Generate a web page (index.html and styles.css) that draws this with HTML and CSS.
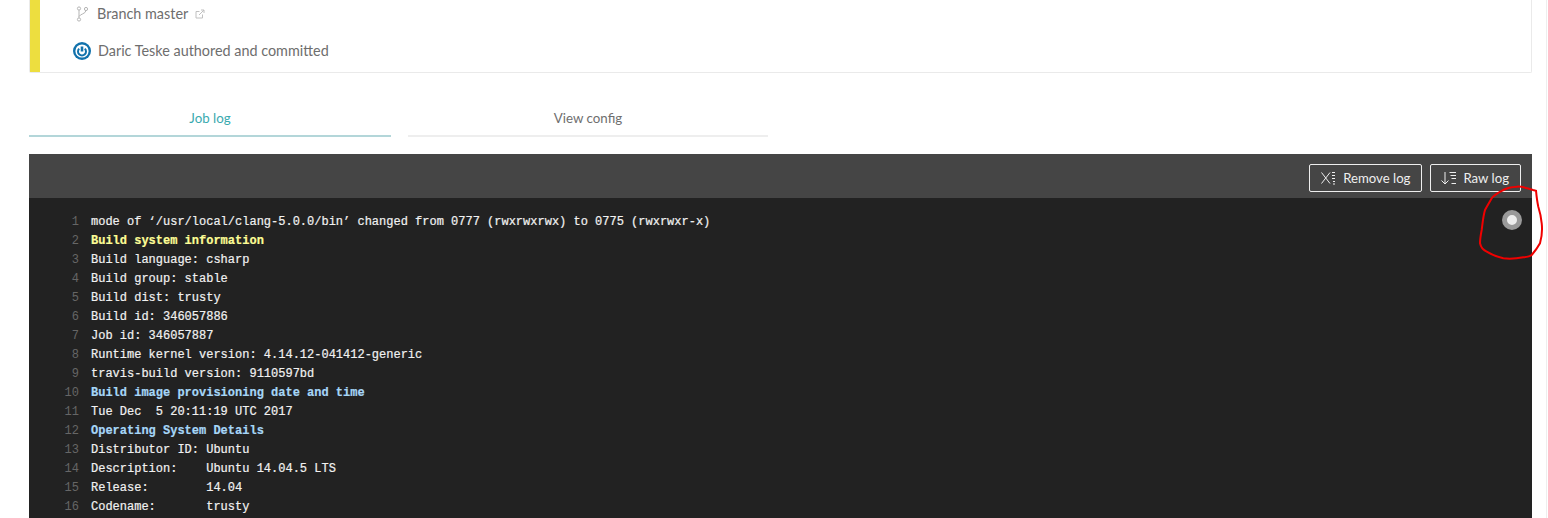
FILE: index.html
```html
<!DOCTYPE html>
<html lang="en">
<head>
<meta charset="utf-8">
<title>Job log</title>
<link rel="stylesheet" href="styles.css">
</head>
<body>
<main class="page">
  <section class="card">
    <div class="stripe"></div>
    <div class="meta">
      <div class="row branch">
        <svg class="i-branch" viewBox="0 0 12 16" width="12" height="16" fill="none" stroke="#b5b5b5" stroke-width="1">
          <circle cx="3" cy="2.5" r="1.6"/><circle cx="3" cy="13.5" r="1.6"/><circle cx="10" cy="3" r="1.6"/>
          <path d="M3 4.1V11.9M3 10.5C4 8 9.5 8 10 4.6"/>
        </svg>
        <span>Branch master</span>
        <svg class="i-ext" viewBox="0 0 10 10" width="10" height="10" fill="none" stroke="#c0c0c0" stroke-width="1">
          <path d="M7.5 5.5V9H1V2.5H4.5M4 6L9 1M6 1H9V4"/>
        </svg>
      </div>
      <div class="row author">
        <svg class="i-avatar" viewBox="0 0 18 18" width="18" height="18">
          <circle cx="9" cy="9" r="9" fill="#1272ac"/>
          <circle cx="9" cy="9" r="6.6" fill="#fff"/>
          <path d="M9 4.5V9.5" stroke="#1272ac" stroke-width="2.6" fill="none"/>
          <path d="M6.2 6.6A4 4 0 1 0 11.8 6.6" stroke="#1272ac" stroke-width="2" fill="none"/>
        </svg>
        <span>Daric Teske authored and committed</span>
      </div>
    </div>
  </section>

  <nav class="tabs">
    <a class="tab active">Job log</a>
    <a class="tab">View config</a>
  </nav>

  <section class="log">
    <header class="log-head">
      <a class="btn btn-remove">
        <svg viewBox="0 0 15 14" width="15" height="14" fill="none" stroke="#eee" stroke-width="1">
          <path d="M0.5 1.5L9 12.5M9 1.5L0.5 12.5M11 1.5H14M11 4.5H14M11 7.5H14M12 10.5H14M12 13H14"/>
        </svg>
        <span>Remove log</span>
      </a>
      <a class="btn">
        <svg viewBox="0 0 15 14" width="15" height="14" fill="none" stroke="#eee" stroke-width="1">
          <path d="M4 1V13M0.5 9.5L4 13L7.5 9.5M8.5 1.5H15M9.5 4.5H15M10.5 7.5H15M10.5 12.5H15"/>
        </svg>
        <span>Raw log</span>
      </a>
    </header>
    <div class="log-body">
      <ol class="lines">
        <li>mode of ‘/usr/local/clang-5.0.0/bin’ changed from 0777 (rwxrwxrwx) to 0775 (rwxrwxr-x)</li>
        <li class="y">Build system information</li>
        <li>Build language: csharp</li>
        <li>Build group: stable</li>
        <li>Build dist: trusty</li>
        <li>Build id: 346057886</li>
        <li>Job id: 346057887</li>
        <li>Runtime kernel version: 4.14.12-041412-generic</li>
        <li>travis-build version: 9110597bd</li>
        <li class="b">Build image provisioning date and time</li>
        <li>Tue Dec  5 20:11:19 UTC 2017</li>
        <li class="b">Operating System Details</li>
        <li>Distributor ID: Ubuntu</li>
        <li>Description:    Ubuntu 14.04.5 LTS</li>
        <li>Release:        14.04</li>
        <li>Codename:       trusty</li>
      </ol>
      <span class="dot"></span>
    </div>
  </section>
</main>
<svg class="scribble" viewBox="0 0 1548 518" width="1548" height="518" fill="none" stroke="#f00000" stroke-width="2">
  <path d="M1533 190C1527 188 1521 186 1516.7 186.7C1511 187 1507 188 1503.3 190C1498 193 1494 195 1491.7 198.3C1489 203 1487 206 1485 210C1483 217 1482.5 224 1481.7 230C1480.5 236 1480 240 1480 243.3C1481 248 1483 250 1486.7 251.7C1492 255 1498 257 1503.3 258.3C1510 259 1517 258.5 1523.3 257.3C1527 257 1530 256.5 1531.7 255C1536 250 1538 247 1540 243.3C1542 236 1542.5 230 1541.7 223.3C1541 216 1540 212 1538.3 206.7C1537 201 1536.5 196 1536 190.7L1533 190"/>
</svg>
</body>
</html>
```

FILE: styles.css
```css
* { box-sizing: border-box; }
html, body { margin: 0; height: 518px; overflow: hidden; background: #fff; }
body { font-family: "Lato", "Liberation Sans", sans-serif; color: #6e6e6e; position: relative; }
.page { width: 1547px; height: 518px; padding-left: 29px; padding-right: 15px; border-right: 1px solid #eee; }
.card { display: flex; width: 1503px; height: 73px; border: 1px solid #eaeaea; border-top: 0; border-radius: 0 0 2px 2px; }
.stripe { width: 10px; background: #edde3f; }
.meta { display: flex; flex-direction: column; padding-left: 33px; }
.row { display: flex; align-items: center; font-size: 14.4px; line-height: 18px; }
.branch { height: 28px; padding-left: 3px; gap: 7px; }
.branch span { margin: -1px 0 0 2px; }
.author { height: 18px; margin-top: 14px; gap: 7px; }
.author span { margin-top: -1px; }
.tabs { display: flex; gap: 17px; margin-top: 29px; height: 35px; }
.tab { width: 360px; display: flex; align-items: center; justify-content: center; font-size: 13.3px; color: #6e6e6e; border-bottom: 2px solid #eee; padding-bottom: 2px; }
.tab.active { width: 362px; color: #39aaaf; border-bottom-color: #b3d6d9; }
.log { margin-top: 17px; width: 1503px; height: 364px; background: #222; }
.log-head { height: 44px; background: #454545; display: flex; justify-content: flex-end; align-items: flex-start; gap: 8px; padding: 10px 11px 0 0; }
.btn { height: 28px; display: flex; align-items: center; gap: 7px; padding: 0 11px 0 10px; border: 1px solid #eee; border-radius: 2px; color: #eee; font-size: 13.2px; }
.btn-remove { padding-left: 11px; }
.log-body { position: relative; height: 320px; padding-top: 15px; overflow: hidden; }
.lines { list-style: none; margin: 0; padding: 0; counter-reset: n; font-family: "Liberation Mono", monospace; font-size: 12px; line-height: 19px; color: #f1f1f1; -webkit-text-stroke: 0.2px currentColor; }
.lines li { counter-increment: n; white-space: pre; display: flex; }
.lines li::before { content: counter(n); width: 50px; margin-right: 12px; text-align: right; color: #666; font-weight: 400; -webkit-text-stroke: 0; }
.lines li.y { color: #fdfd96; font-weight: 700; }
.lines li.b { color: #a6d6f7; font-weight: 700; }
.dot { position: absolute; top: 12px; left: 1473px; width: 20px; height: 20px; border-radius: 50%; background: #eee; border: 5px solid #9a9a9a; }
.scribble { position: absolute; left: 0; top: 0; pointer-events: none; }
```
